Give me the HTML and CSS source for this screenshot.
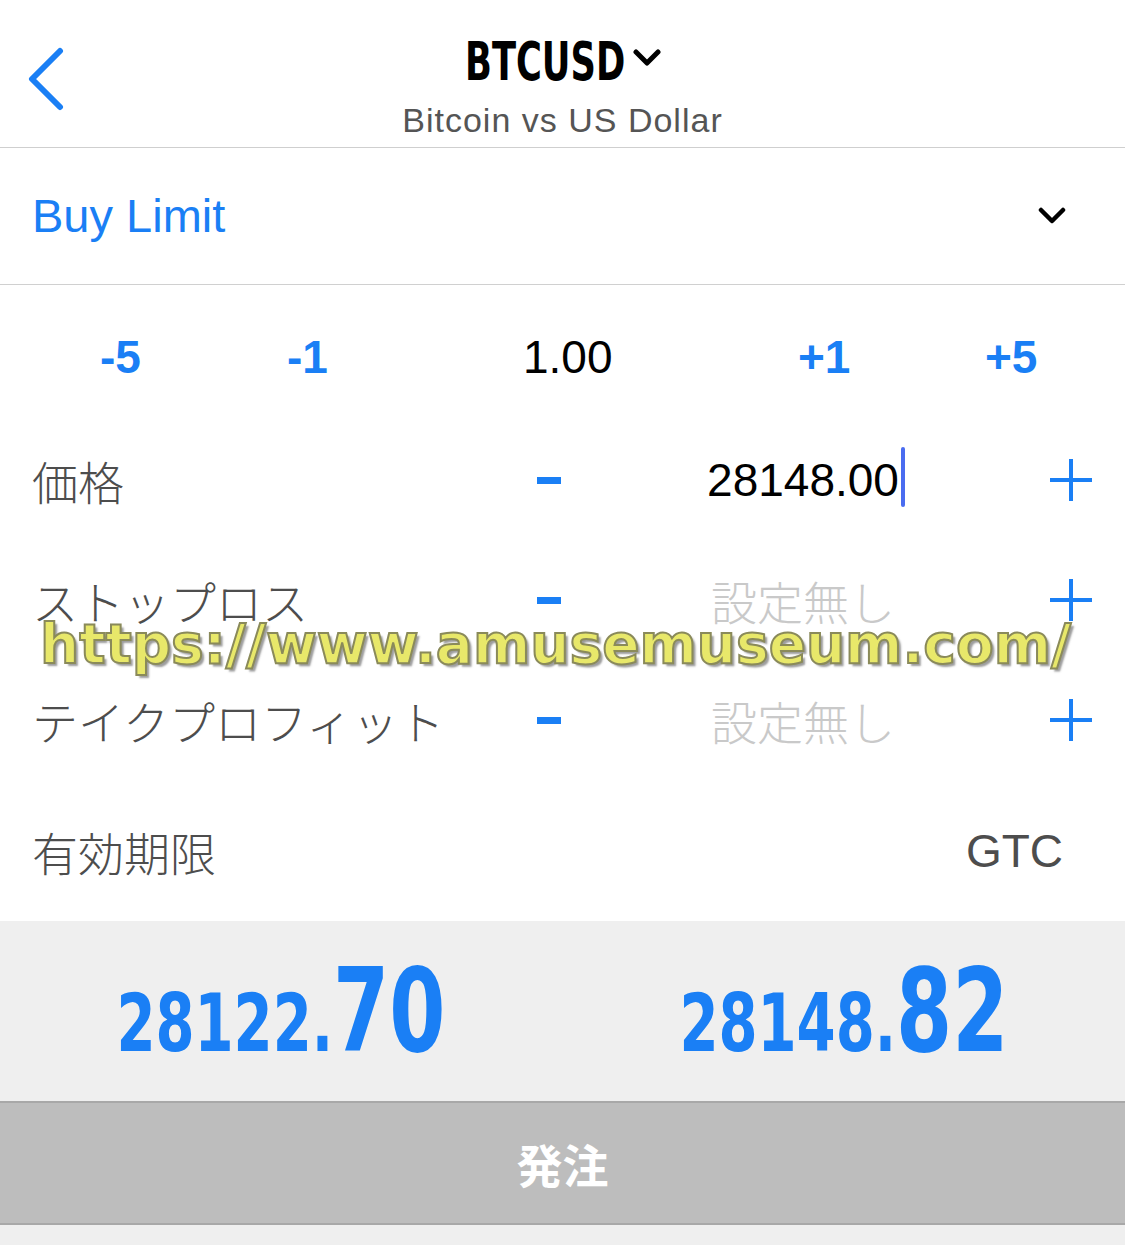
FILE: index.html
```html
<!DOCTYPE html>
<html lang="ja">
<head>
<meta charset="utf-8">
<link rel="stylesheet" href="styles.css">
</head>
<body>
<div class="screen">
  <header class="header">
    <svg class="back" width="40" height="64" viewBox="0 0 40 64"><path d="M33 4 L5 32 L33 60" fill="none" stroke="#1a7ff5" stroke-width="6" stroke-linecap="round" stroke-linejoin="round"/></svg>
    <div class="title-line">
      <span class="title"><span class="title-text">BTCUSD</span></span>
      <svg class="title-caret" width="28" height="20" viewBox="0 0 28 20"><path d="M3 4 L14 15 L25 4" fill="none" stroke="#000" stroke-width="5" stroke-linecap="round" stroke-linejoin="round"/></svg>
    </div>
    <div class="subtitle">Bitcoin vs US Dollar</div>
  </header>

  <div class="type-row">
    <span class="type">Buy Limit</span>
    <svg width="28" height="20" viewBox="0 0 28 20"><path d="M3 4 L14 15 L25 4" fill="none" stroke="#000" stroke-width="4.5" stroke-linecap="round" stroke-linejoin="round"/></svg>
  </div>

  <div class="lot-row">
    <span class="lot-btn">-5</span>
    <span class="lot-btn">-1</span>
    <span class="lot-val">1.00</span>
    <span class="lot-btn">+1</span>
    <span class="lot-btn">+5</span>
  </div>

  <div class="field-row">
    <span class="label">価格</span>
    <span class="minus"></span>
    <span class="value active">28148.00<span class="caret"></span></span>
    <span class="plus"></span>
  </div>
  <div class="field-row">
    <span class="label">ストップロス</span>
    <span class="minus"></span>
    <span class="value empty">設定無し</span>
    <span class="plus"></span>
  </div>
  <div class="field-row">
    <span class="label">テイクプロフィット</span>
    <span class="minus"></span>
    <span class="value empty">設定無し</span>
    <span class="plus"></span>
  </div>

  <div class="expiry-row">
    <span class="label">有効期限</span>
    <span class="gtc">GTC</span>
  </div>

  <div class="quotes">
    <div class="quote"><span class="q-inner"><span class="q-small">28122.</span><span class="q-big">70</span></span></div>
    <div class="quote"><span class="q-inner"><span class="q-small">28148.</span><span class="q-big">82</span></span></div>
  </div>

  <div class="submit">発注</div>
  <div class="bottom"></div>

  <div class="watermark">https://www.amusemuseum.com/</div>
</div>
</body>
</html>
```

FILE: styles.css
```css
* { box-sizing: border-box; }
html, body { margin: 0; padding: 0; background: #fff; }
body {
  font-family: "Liberation Sans", "Noto Sans CJK JP", sans-serif;
  width: 1125px;
  height: 1245px;
  overflow: hidden;
}
.screen { position: relative; width: 1125px; height: 1245px; }

.header {
  position: relative;
  height: 148px;
  border-bottom: 1px solid #cfcfcf;
  display: flex;
  flex-direction: column;
  align-items: center;
  padding-top: 30px;
}
.back { position: absolute; left: 27px; top: 47px; }
.title-line { display: flex; align-items: center; gap: 12px; height: 62px; }
.title { display: inline-block; width: 156px; white-space: nowrap; }
.title-text {
  display: inline-block;
  font-family: "DejaVu Sans Condensed", sans-serif;
  font-weight: 700;
  font-size: 53px;
  color: #000;
  transform: scaleX(0.74);
  transform-origin: left center;
}
.title-caret { margin-top: -6px; }
.subtitle { font-size: 34px; letter-spacing: 1px; color: #555; margin-top: 6px; line-height: 44px; }

.type-row {
  height: 137px;
  border-bottom: 1px solid #d0d0d0;
  display: flex;
  align-items: center;
  justify-content: space-between;
  padding: 0 59px 0 32px;
}
.type { font-size: 47px; color: #1a7ff5; margin-top: -2px; }

.lot-row {
  height: 135px;
  display: grid;
  grid-template-columns: 187px 236px 275px 187px 1fr;
  align-items: center;
  padding-left: 100px;
  padding-top: 8px;
  font-size: 46px;
}
.lot-btn { color: #1a7ff5; font-weight: 700; }
.lot-val { color: #000; }

.field-row {
  height: 120px;
  display: grid;
  grid-template-columns: 458px 118px 390px 1fr;
  align-items: center;
  padding-left: 32px;
}
.label { font-size: 46px; color: #4d4d4d; font-family: "Noto Sans CJK JP", sans-serif; font-weight: 300; }
.minus { justify-self: center; width: 24px; height: 7px; background: #1a7ff5; }
.value { justify-self: center; font-size: 46px; position: relative; }
.value.active { color: #000; }
.value.empty { color: #c9c9c9; font-family: "Noto Sans CJK JP", sans-serif; font-weight: 300; }
.caret {
  position: absolute;
  right: -6px;
  top: -6px;
  width: 4px;
  height: 60px;
  border-radius: 2px;
  background: #4a6cf0;
}
.plus {
  justify-self: end;
  margin-right: 33px;
  width: 42px;
  height: 42px;
  position: relative;
}
.plus::before, .plus::after {
  content: "";
  position: absolute;
  background: #1a7ff5;
}
.plus::before { left: 0; right: 0; top: 19px; height: 4px; }
.plus::after { top: 0; bottom: 0; left: 19px; width: 4px; }

.expiry-row {
  height: 141px;
  display: flex;
  align-items: center;
  justify-content: space-between;
  padding: 0 62px 0 32px;
}
.gtc { font-size: 46px; color: #4d4d4d; }

.quotes {
  height: 180px;
  background: #efefef;
  display: grid;
  grid-template-columns: 1fr 1fr;
  align-items: center;
}
.quote { display: flex; justify-content: center; padding-top: 0px; }
.q-inner {
  display: inline-block;
  font-family: "DejaVu Sans Condensed", sans-serif;
  font-weight: 700;
  color: #1a7ff5;
  white-space: nowrap;
  line-height: 1;
  transform: scaleX(0.78);
  transform-origin: center center;
}
.q-small { font-size: 80px; }
.q-big { font-size: 115px; }

.submit {
  height: 124px;
  background: #bdbdbd;
  border-top: 2px solid #a8a8a8;
  border-bottom: 2px solid #a8a8a8;
  display: flex;
  align-items: center;
  justify-content: center;
  color: #fff;
  font-family: "Noto Sans CJK JP", sans-serif;
  font-weight: 700;
  font-size: 46px;
}
.bottom { height: 20px; background: #efefef; }

.watermark {
  position: absolute;
  left: 40px;
  top: 606px;
  font-family: "DejaVu Sans", sans-serif;
  font-weight: 700;
  font-size: 55px;
  line-height: 76px;
  color: #e8e86a;
  -webkit-text-stroke: 2px #8a8a5a;
  text-shadow: 3px 3px 2px rgba(90, 90, 90, 0.6);
  white-space: nowrap;
}
```
